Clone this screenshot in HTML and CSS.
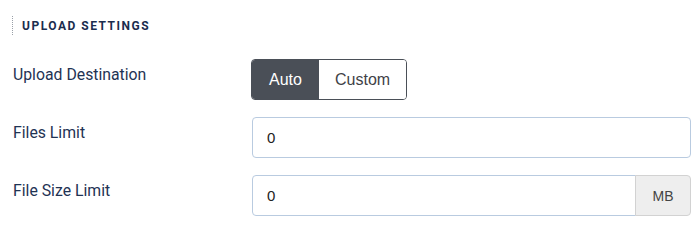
FILE: index.html
```html
<!DOCTYPE html>
<html>
<head>
<meta charset="utf-8">
<link rel="stylesheet" href="styles.css">
</head>
<body>
<div class="panel">
  <div class="section-title"><span>UPLOAD SETTINGS</span></div>
  <div class="row">
    <div class="label">Upload Destination</div>
    <div class="control">
      <div class="toggle">
        <button class="opt active">Auto</button>
        <button class="opt">Custom</button>
      </div>
    </div>
  </div>
  <div class="row">
    <div class="label">Files Limit</div>
    <div class="control">
      <input class="input full" type="text" value="0">
    </div>
  </div>
  <div class="row">
    <div class="label">File Size Limit</div>
    <div class="control">
      <div class="group">
        <input class="input grouped" type="text" value="0">
        <span class="addon">MB</span>
      </div>
    </div>
  </div>
</div>
</body>
</html>
```

FILE: styles.css
```css
* { box-sizing: border-box; }
html, body { margin: 0; padding: 0; background: #ffffff; }
body { font-family: Roboto, "Liberation Sans", sans-serif; }

.panel {
  padding: 16px 6px 0 12px;
}

.section-title {
  border-left: 1px dotted #9aa0a8;
  padding-left: 9px;
  height: 19px;
  display: flex;
  align-items: center;
}
.section-title span {
  font-size: 12px;
  font-weight: 700;
  letter-spacing: 1.5px;
  color: #1b2d4e;
}

.row {
  display: flex;
  align-items: flex-start;
  margin-top: 17px;
}
.section-title + .row { margin-top: 24px; }

.label {
  width: 239px;
  flex: none;
  padding-left: 1px;
  padding-top: 6px;
  font-size: 15.8px;
  line-height: 20px;
  color: #1f3354;
}

.control {
  flex: 1;
  display: flex;
}

.toggle {
  display: flex;
  height: 41px;
  border: 1px solid #4a4f57;
  border-radius: 4px;
  overflow: hidden;
}
.opt {
  border: none;
  margin: 0;
  background: #ffffff;
  color: #3f4247;
  font-family: "Liberation Sans", Arial, sans-serif;
  font-size: 16px;
  padding: 0 16px;
  height: 100%;
}
.opt.active {
  background: #4a4f57;
  color: #ffffff;
  width: 67px;
}

.input {
  height: 41px;
  border: 1px solid #b9cbe0;
  border-radius: 4px;
  padding: 0 14px;
  font-family: "Liberation Sans", Arial, sans-serif;
  font-size: 15px;
  color: #222;
  outline: none;
  background: #fff;
  margin: 0;
}
.input.full { width: 100%; margin-left: 1px; }

.group {
  display: flex;
  width: 100%;
  margin-left: 1px;
}
.input.grouped {
  flex: 1;
  min-width: 0;
  border-radius: 4px 0 0 4px;
}
.addon {
  flex: none;
  width: 56px;
  height: 41px;
  display: flex;
  align-items: center;
  justify-content: center;
  background: #eeeeee;
  border: 1px solid #d2d2d2;
  border-radius: 0 4px 4px 0;
  font-family: "Liberation Sans", Arial, sans-serif;
  font-size: 14px;
  color: #444;
  margin-left: -1px;
}
```
